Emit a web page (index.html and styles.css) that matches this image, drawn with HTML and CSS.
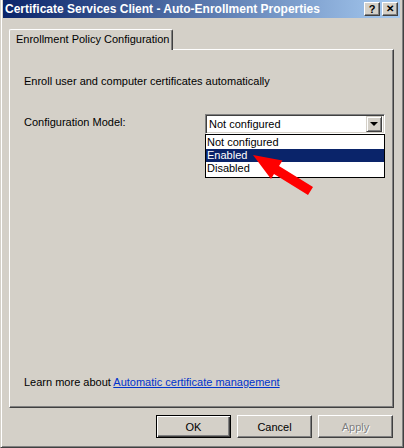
FILE: index.html
```html
<!DOCTYPE html>
<html>
<head>
<meta charset="utf-8">
<link rel="stylesheet" href="styles.css">
</head>
<body>
<div class="window">
  <div class="titlebar">
    <span class="title">Certificate Services Client - Auto-Enrollment Properties</span>
    <div class="tbtns">
      <span class="tbtn">?</span>
      <span class="tbtn x">&#x2715;</span>
    </div>
  </div>
  <div class="body">
    <div class="tabs">
      <div class="tab">Enrollment Policy Configuration</div>
    </div>
    <div class="panel">
      <p class="intro">Enroll user and computer certificates automatically</p>
      <div class="row">
        <span class="label">Configuration Model:</span>
        <div class="combo-wrap">
          <div class="combo">
            <span class="combo-val">Not configured</span>
            <span class="combo-btn"><span class="tri"></span></span>
          </div>
          <div class="list">
            <div class="opt">Not configured</div>
            <div class="opt sel">Enabled</div>
            <div class="opt">Disabled</div>
          </div>
        </div>
      </div>
      <div class="spacer"></div>
      <p class="more">Learn more about <a href="#">Automatic certificate management</a></p>
    </div>
    <div class="buttons">
      <button class="btn def">OK</button>
      <button class="btn">Cancel</button>
      <button class="btn dis">Apply</button>
    </div>
  </div>
  <svg class="arrow" width="404" height="448" viewBox="0 0 404 448">
    <polygon points="252,155 281.5,160.5 278,166 312,187 307,195 273,174 270,179" fill="#ff0000"/>
  </svg>
</div>
</body>
</html>
```
FILE: styles.css
```css
* { box-sizing: border-box; }
html, body { margin: 0; padding: 0; }
body {
  width: 404px;
  height: 448px;
  overflow: hidden;
  background: #d4d0c8;
  font-family: "Liberation Sans", Arial, sans-serif;
  font-size: 11px;
  color: #000;
}
.window {
  position: relative;
  width: 404px;
  height: 448px;
  background: #d4d0c8;
  border-left: 1px solid #d4d0c8;
  border-right: 1px solid #404040;
  border-bottom: 1px solid #404040;
  box-shadow: inset 1px 0 #ffffff, inset -1px -1px #808080;
  padding: 0 3px 3px 2px;
  display: flex;
  flex-direction: column;
}
.titlebar {
  height: 18px;
  background: linear-gradient(to right, #0a246a, #a6caf0);
  display: flex;
  align-items: center;
  justify-content: space-between;
  padding: 0 2px 0 2px;
}
.title {
  color: #fff;
  font-weight: bold;
  font-size: 12px;
  white-space: nowrap;
}
.tbtns { display: flex; gap: 2px; }
.tbtn {
  width: 16px;
  height: 14px;
  background: #d4d0c8;
  border-top: 1px solid #fff;
  border-left: 1px solid #fff;
  border-right: 1px solid #404040;
  border-bottom: 1px solid #404040;
  box-shadow: inset -1px -1px #808080;
  display: flex;
  align-items: center;
  justify-content: center;
  font-weight: bold;
  font-size: 11px;
  line-height: 1;
}
.tbtn.x { font-size: 10px; }
.body {
  flex: 1;
  display: flex;
  flex-direction: column;
  padding: 11px 6px 0 6px;
}
.tabs { display: flex; height: 20px; }
.tab {
  position: relative;
  z-index: 1;
  height: 21px;
  padding: 3px 7px 0 6px;
  width: 164px;
  background: #d4d0c8;
  border-top: 1px solid #fff;
  border-left: 1px solid #fff;
  border-right: 1px solid #404040;
  box-shadow: inset -1px 0 #808080;
  border-radius: 2px 2px 0 0;
  white-space: nowrap;
}
.panel {
  height: 359px;
  border-top: 1px solid #fff;
  border-left: 1px solid #fff;
  border-right: 1px solid #404040;
  border-bottom: 1px solid #404040;
  box-shadow: inset -1px -1px #808080;
  padding: 0 8px 0 14px;
  display: flex;
  flex-direction: column;
}
.intro { margin: 25px 0 0 0; line-height: 13px; }
.row {
  display: flex;
  align-items: flex-start;
  margin-top: 26px;
}
.label { width: 181px; line-height: 13px; padding-top: 2px; }
.combo-wrap { position: relative; width: 180px; }
.combo {
  height: 20px;
  background: #fff;
  border-top: 1px solid #808080;
  border-left: 1px solid #808080;
  border-right: 1px solid #fff;
  border-bottom: 1px solid #fff;
  box-shadow: inset 1px 1px #404040, inset -1px -1px #d4d0c8;
  display: flex;
  align-items: center;
  padding: 0 2px 0 3px;
}
.combo-val { flex: 1; line-height: 13px; }
.combo-btn {
  width: 16px;
  height: 16px;
  background: #d4d0c8;
  border-top: 1px solid #d4d0c8;
  border-left: 1px solid #d4d0c8;
  border-right: 1px solid #404040;
  border-bottom: 1px solid #404040;
  box-shadow: inset 1px 1px #fff, inset -1px -1px #808080;
  display: flex;
  align-items: center;
  justify-content: center;
}
.tri {
  width: 0;
  height: 0;
  border-left: 4px solid transparent;
  border-right: 4px solid transparent;
  border-top: 4px solid #000;
}
.list {
  position: absolute;
  left: 0;
  top: 20px;
  width: 180px;
  background: #fff;
  border: 1px solid #000;
  padding: 1px 0 2px 0;
}
.opt { height: 13px; line-height: 13px; padding-left: 1px; }
.opt.sel { background: #0a246a; color: #fff; }
.spacer { flex: 1; }
.more { margin: 0 0 18px 0; line-height: 13px; }
.more a { color: #0033cc; text-decoration: underline; }
.buttons {
  display: flex;
  justify-content: flex-end;
  gap: 6px;
  margin-top: 7px;
  padding-right: 1px;
}
.btn {
  width: 75px;
  height: 23px;
  background: #d4d0c8;
  font-family: inherit;
  font-size: 11px;
  color: #000;
  border-top: 1px solid #fff;
  border-left: 1px solid #fff;
  border-right: 1px solid #404040;
  border-bottom: 1px solid #404040;
  box-shadow: inset -1px -1px #808080;
  padding: 0;
}
.btn.def {
  border: 1px solid #000;
  box-shadow: inset 1px 1px #fff, inset -1px -1px #404040, inset -2px -2px #808080;
}
.btn.dis { color: #808080; text-shadow: 1px 1px #fff; }
.arrow {
  position: absolute;
  left: 0;
  top: 0;
  pointer-events: none;
}
```
